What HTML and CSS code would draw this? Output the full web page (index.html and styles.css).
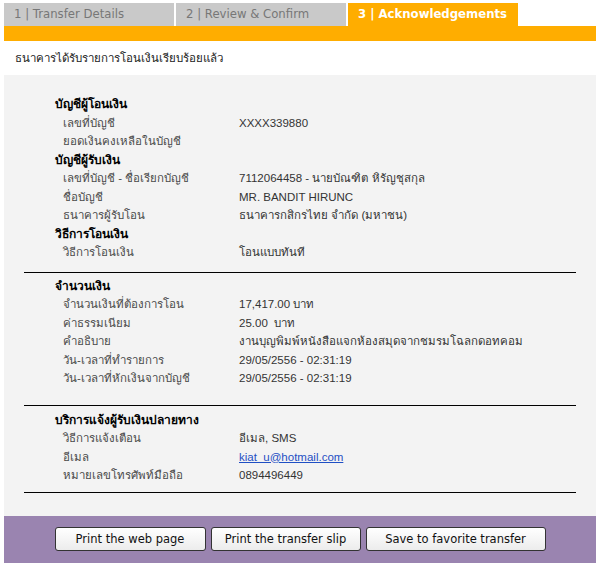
FILE: index.html
```html
<!DOCTYPE html>
<html>
<head>
    <title>Transfer - Acknowledgements</title>
    <link rel="stylesheet" href="styles.css">
</head>
<body>
    <div class="page">
        <ul class="steps">
            <li class="step">1 | Transfer Details</li>
            <li class="step">2 | Review &amp; Confirm</li>
            <li class="step active">3 | Acknowledgements</li>
        </ul>
        <div class="step-bar"></div>

        <p class="notice">ธนาคารได้รับรายการโอนเงินเรียบร้อยแล้ว</p>

        <div class="panel">
            <!-- accounts -->
            <div class="group first">
                <div class="title">บัญชีผู้โอนเงิน</div>
                <div class="row"><span class="label">เลขที่บัญชี</span><span class="value">XXXX339880</span></div>
                <div class="row"><span class="label">ยอดเงินคงเหลือในบัญชี</span><span class="value"></span></div>
                <div class="title">บัญชีผู้รับเงิน</div>
                <div class="row"><span class="label">เลขที่บัญชี - ชื่อเรียกบัญชี</span><span class="value">7112064458 - นายบัณฑิต หิรัญชุสกุล</span></div>
                <div class="row"><span class="label">ชื่อบัญชี</span><span class="value">MR. BANDIT HIRUNC</span></div>
                <div class="row"><span class="label">ธนาคารผู้รับโอน</span><span class="value">ธนาคารกสิกรไทย จำกัด (มหาชน)</span></div>
                <div class="title">วิธีการโอนเงิน</div>
                <div class="row"><span class="label">วิธีการโอนเงิน</span><span class="value">โอนแบบทันที</span></div>
            </div>

            <!-- amount -->
            <div class="group amount">
                <div class="title">จำนวนเงิน</div>
                <div class="row"><span class="label">จำนวนเงินที่ต้องการโอน</span><span class="value">17,417.00 บาท</span></div>
                <div class="row"><span class="label">ค่าธรรมเนียม</span><span class="value">25.00&nbsp; บาท</span></div>
                <div class="row"><span class="label">คำอธิบาย</span><span class="value">งานบุญพิมพ์หนังสือแจกห้องสมุดจากชมรมโฉลกดอทคอม</span></div>
                <div class="row"><span class="label">วัน-เวลาที่ทำรายการ</span><span class="value">29/05/2556 - 02:31:19</span></div>
                <div class="row"><span class="label">วัน-เวลาที่หักเงินจากบัญชี</span><span class="value">29/05/2556 - 02:31:19</span></div>
            </div>

            <!-- notify -->
            <div class="group notify">
                <div class="title">บริการแจ้งผู้รับเงินปลายทาง</div>
                <div class="row"><span class="label">วิธีการแจ้งเตือน</span><span class="value">อีเมล, SMS</span></div>
                <div class="row"><span class="label">อีเมล</span><span class="value"><a href="#">kiat_u@hotmail.com</a></span></div>
                <div class="row"><span class="label">หมายเลขโทรศัพท์มือถือ</span><span class="value">0894496449</span></div>
            </div>
            <div class="rule"></div>
        </div>

        <div class="actions">
            <button class="btn btn-page">Print the web page</button>
            <button class="btn btn-slip">Print the transfer slip</button>
            <button class="btn btn-fav">Save to favorite transfer</button>
        </div>
    </div>
</body>
</html>
```

FILE: styles.css
```css
body {
    margin: 0;
    background-color: #fff;
    font-family: "Liberation Sans", Arial, sans-serif;
    font-size: 12px;
    color: #333;
}

.page {
    width: 592px;
    padding: 3px 0 0 4px;
}

/* step tabs */
.steps {
    display: flex;
    list-style: none;
    margin: 0;
    padding: 0;
    height: 23px;
}

.step {
    width: 160px;
    margin-right: 2px;
    padding-left: 10px;
    background-color: #c9c9c9;
    color: #777;
    font-family: "DejaVu Sans", Verdana, sans-serif;
    font-size: 11.7px;
    line-height: 23px;
}

.step.active {
    background-color: #ffad00;
    color: #fff;
    font-weight: bold;
}

.step-bar {
    height: 15px;
    background-color: #ffad00;
}

.notice {
    margin: 0;
    height: 34px;
    padding-left: 11px;
    line-height: 35px;
    font-size: 11.5px;
    color: #222;
}

/* details panel */
.panel {
    background-color: #f3f3f3;
    padding: 0 20px 23px 20px;
}

.group {
    padding-left: 31px;
    border-top: 1px solid #000;
}

.group.first {
    border-top: none;
    padding-top: 20px;
    padding-bottom: 10px;
}

.group.amount {
    padding-top: 4px;
    padding-bottom: 17px;
}

.group.notify {
    padding-top: 5px;
    padding-bottom: 7px;
}

.rule {
    border-top: 1px solid #000;
}

.title {
    height: 18.5px;
    line-height: 18.5px;
    font-weight: bold;
    color: #000;
}

.row {
    display: flex;
    height: 18.5px;
    line-height: 18.5px;
}

.label {
    width: 176px;
    padding-left: 8px;
    font-size: 11.5px;
    color: #4a4a4a;
}

.value {
    font-size: 11.5px;
    color: #333;
}

.value a {
    color: #1f4fc4;
}

/* bottom buttons */
.actions {
    display: flex;
    justify-content: center;
    gap: 5px;
    height: 47px;
    padding-top: 11px;
    box-sizing: border-box;
    background-color: #9a84b0;
}

.btn {
    height: 24px;
    padding: 0;
    border: 1px solid #333;
    border-radius: 3px;
    background: linear-gradient(to bottom, #ffffff, #ececec);
    font-family: "DejaVu Sans", Verdana, sans-serif;
    font-size: 11.5px;
    color: #111;
}

.btn-page {
    width: 151px;
}

.btn-slip {
    width: 150px;
}

.btn-fav {
    width: 180px;
}
```
